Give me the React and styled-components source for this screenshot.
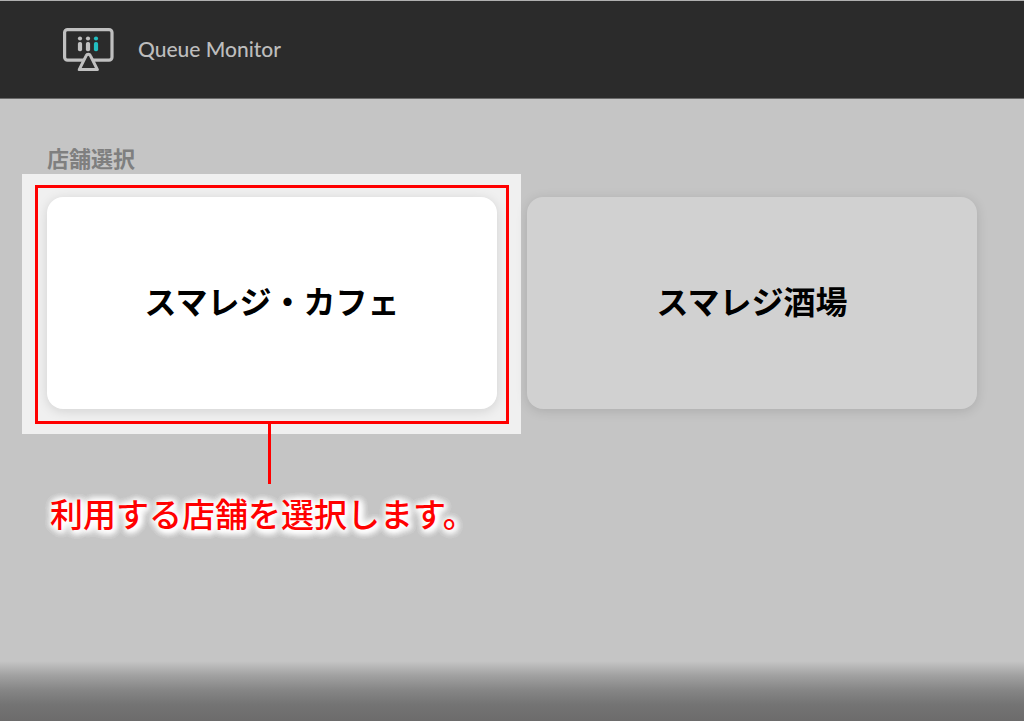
import React from 'react';
import styled, { createGlobalStyle } from 'styled-components';

const stores = [
    { id: 1, name: 'スマレジ・カフェ', highlighted: true },
    { id: 2, name: 'スマレジ酒場', highlighted: false },
];

const MonitorIcon = () => (
    <svg width="52" height="46" viewBox="0 0 52 46" fill="none" aria-hidden="true">
        <rect x="2.6" y="3.6" width="47.4" height="30.6" rx="3" stroke="#c0c0c0" strokeWidth="3.2" />
        <path
            d="M24.2 29.6 17.2 43.6h18.2L28.4 29.6a2.3 2.3 0 0 0-4.2 0Z"
            fill="#2b2b2b"
            stroke="#c0c0c0"
            strokeWidth="3"
            strokeLinejoin="round"
        />
        <g fill="#c0c0c0">
            <circle cx="18" cy="12.5" r="2.1" />
            <rect x="15.9" y="16" width="4.2" height="9.2" rx="1.8" />
            <circle cx="26" cy="12.5" r="2.1" />
            <rect x="23.9" y="16" width="4.2" height="9.2" rx="1.8" />
        </g>
        <g fill="#22bfc1">
            <circle cx="34" cy="12.5" r="2.1" />
            <rect x="31.9" y="16" width="4.2" height="9.2" rx="1.8" />
        </g>
    </svg>
);

const App = () => {
    return (
        <Page>
            <GlobalStyle />
            <Header>
                <MonitorIcon />
                <Brand>Queue Monitor</Brand>
            </Header>
            <Main>
                <Title>店舗選択</Title>
                <StoreList>
                    {stores.map((store) => (
                        <StoreItem key={store.id}>
                            {store.highlighted && <Spotlight />}
                            <StoreButton type="button" $active={store.highlighted}>
                                {store.name}
                            </StoreButton>
                            {store.highlighted && (
                                <>
                                    <Frame />
                                    <Callout>利用する店舗を選択します。</Callout>
                                </>
                            )}
                        </StoreItem>
                    ))}
                </StoreList>
            </Main>
            <Footer />
        </Page>
    );
};

const GlobalStyle = createGlobalStyle`
    * {
        box-sizing: border-box;
    }
    body {
        margin: 0;
        background: #c5c5c5;
        font-family: "Noto Sans CJK JP", sans-serif;
    }
`;
const Page = styled.div`
    display: flex;
    flex-direction: column;
    min-height: 100vh;
`;
const Header = styled.header`
    display: flex;
    align-items: center;
    gap: 24px;
    height: 99px;
    padding: 0 62px 2px;
    background: #2b2b2b;
    border-top: 1px solid #b0b0b0;
    border-bottom: 1px solid #6a6a6a;
`;
const Brand = styled.span`
    font-family: Lato, sans-serif;
    font-size: 21px;
    line-height: 32px;
    font-weight: 500;
    color: #bdbdbd;
`;
const Main = styled.main`
    flex: 1;
    padding: 42px 47px;
`;
const Title = styled.h1`
    margin: 0 0 24px;
    font-size: 22px;
    line-height: 32px;
    font-weight: 700;
    color: #7f7f7f;
`;
const StoreList = styled.ul`
    display: grid;
    grid-template-columns: 1fr 1fr;
    gap: 30px;
    margin: 0;
    padding: 0;
    list-style: none;
`;
const StoreItem = styled.li`
    position: relative;
`;
const StoreButton = styled.button`
    position: relative;
    display: block;
    width: 100%;
    height: 212px;
    padding: 0 16px 6px;
    border: 0;
    border-radius: 16px;
    background: ${(props) => (props.$active ? '#fff' : '#d1d1d1')};
    box-shadow: 0 2px 12px rgba(0, 0, 0, 0.13);
    font-family: inherit;
    font-size: 32px;
    line-height: 48px;
    font-weight: 700;
    color: #000;
    cursor: pointer;
`;

// Guide overlay around the store to pick
const Spotlight = styled.div`
    position: absolute;
    inset: -23px -24px -25px -25px;
    background: #f0f0f0;
`;
const Frame = styled.div`
    position: absolute;
    inset: -12px -12px -15px;
    border: 3px solid #f00;
    pointer-events: none;
    &::after {
        content: '';
        position: absolute;
        top: 100%;
        left: calc(50% - 4px);
        width: 3px;
        height: 63px;
        background: #f00;
    }
`;
const Callout = styled.p`
    position: absolute;
    top: 100%;
    left: 3px;
    margin: 80px 0 0;
    font-size: 33px;
    line-height: 48px;
    font-weight: 500;
    white-space: nowrap;
    color: #f00;
    text-shadow: 1px 1px 4px #fff, 1px 1px 6px #fff, 1px 1px 8px #fff, 1px 1px 8px #fff, 1px 1px 8px #fff,
        1px 1px 10px #fff, 1px 1px 10px #fff, 1px 1px 10px #fff;
`;
const Footer = styled.footer`
    height: 60px;
    background: linear-gradient(#c5c5c5, #a0a0a0 25%, #868686 48%, #747474 72%, #6c6b6b);
`;
export default App;
